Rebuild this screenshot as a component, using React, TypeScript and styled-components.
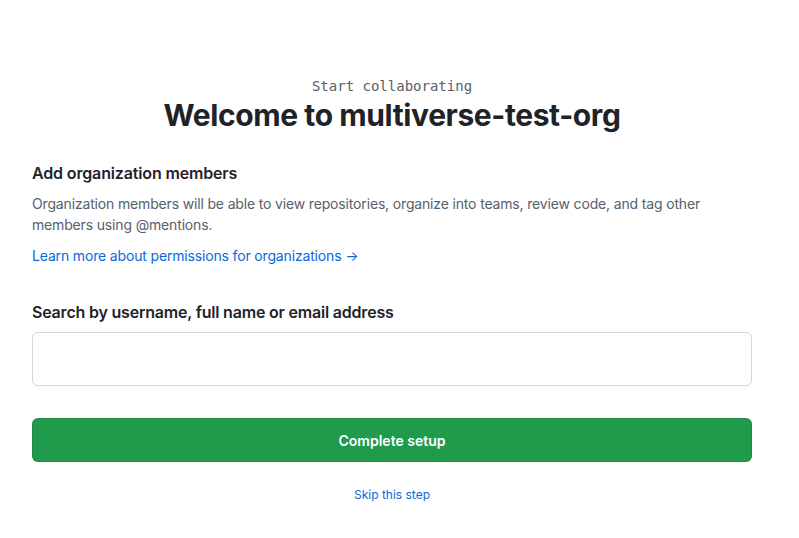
import React from "react";
import styled, { createGlobalStyle } from "styled-components";

const Global = createGlobalStyle`
  html, body { margin: 0; padding: 0; background: #ffffff; }
  body { font-family: Inter, "Liberation Sans", Arial, sans-serif; color: #1f2328; }
`;

const Page = styled.main`
  width: 720px;
  padding: 76px 0 0 32px;
`;

const Header = styled.header`
  display: flex;
  flex-direction: column;
  align-items: center;
  margin-bottom: 27px;
`;

const Eyebrow = styled.div`
  font-family: "DejaVu Sans Mono", "Liberation Mono", monospace;
  font-size: 14px;
  line-height: 20px;
  color: #57606a;
`;

const Title = styled.h1`
  margin: 0;
  font-size: 30px;
  line-height: 38px;
  font-weight: 700;
  letter-spacing: -0.4px;
  color: #1f2328;
`;

const SectionTitle = styled.h2`
  margin: 0 0 8px;
  font-size: 16px;
  line-height: 24px;
  font-weight: 600;
  letter-spacing: -0.15px;
`;

const Body = styled.p`
  margin: 0 0 10px;
  font-size: 14px;
  line-height: 21px;
  letter-spacing: -0.16px;
  color: #57606a;
`;

const Link = styled.a<{ $small?: boolean }>`
  color: #0969da;
  text-decoration: none;
  font-size: ${(p) => (p.$small ? "12px" : "14px")};
  line-height: 21px;
  letter-spacing: ${(p) => (p.$small ? "0" : "-0.16px")};
`;

const Field = styled.div`
  display: flex;
  flex-direction: column;
  margin-top: 34px;
`;

const Label = styled.label`
  font-size: 16px;
  font-weight: 600;
  line-height: 24px;
  letter-spacing: -0.2px;
  margin-bottom: 8px;
`;

const Input = styled.input`
  box-sizing: border-box;
  height: 54px;
  width: 100%;
  border: 1px solid #d0d7de;
  border-radius: 6px;
  background: #fff;
  font-size: 14px;
  padding: 0 12px;
  outline: none;
`;

const Button = styled.button`
  box-sizing: border-box;
  margin-top: 32px;
  height: 44px;
  width: 100%;
  border: 1px solid rgba(31, 35, 40, 0.15);
  border-radius: 6px;
  background: #1f9b4b;
  color: #fff;
  font-family: inherit;
  font-size: 14px;
  font-weight: 600;
`;

const Footer = styled.div`
  display: flex;
  justify-content: center;
  margin-top: 22px;
`;

export default function App() {
  return (
    <>
      <Global />
      <Page>
        <Header>
          <Eyebrow>Start collaborating</Eyebrow>
          <Title>Welcome to multiverse-test-org</Title>
        </Header>
        <SectionTitle>Add organization members</SectionTitle>
        <Body>
          Organization members will be able to view repositories, organize into teams, review code, and tag other
          members using @mentions.
        </Body>
        <Link href="#">Learn more about permissions for organizations →</Link>
        <Field>
          <Label htmlFor="search">Search by username, full name or email address</Label>
          <Input id="search" type="text" />
        </Field>
        <Button type="button">Complete setup</Button>
        <Footer>
          <Link href="#" $small>
            Skip this step
          </Link>
        </Footer>
      </Page>
    </>
  );
}
